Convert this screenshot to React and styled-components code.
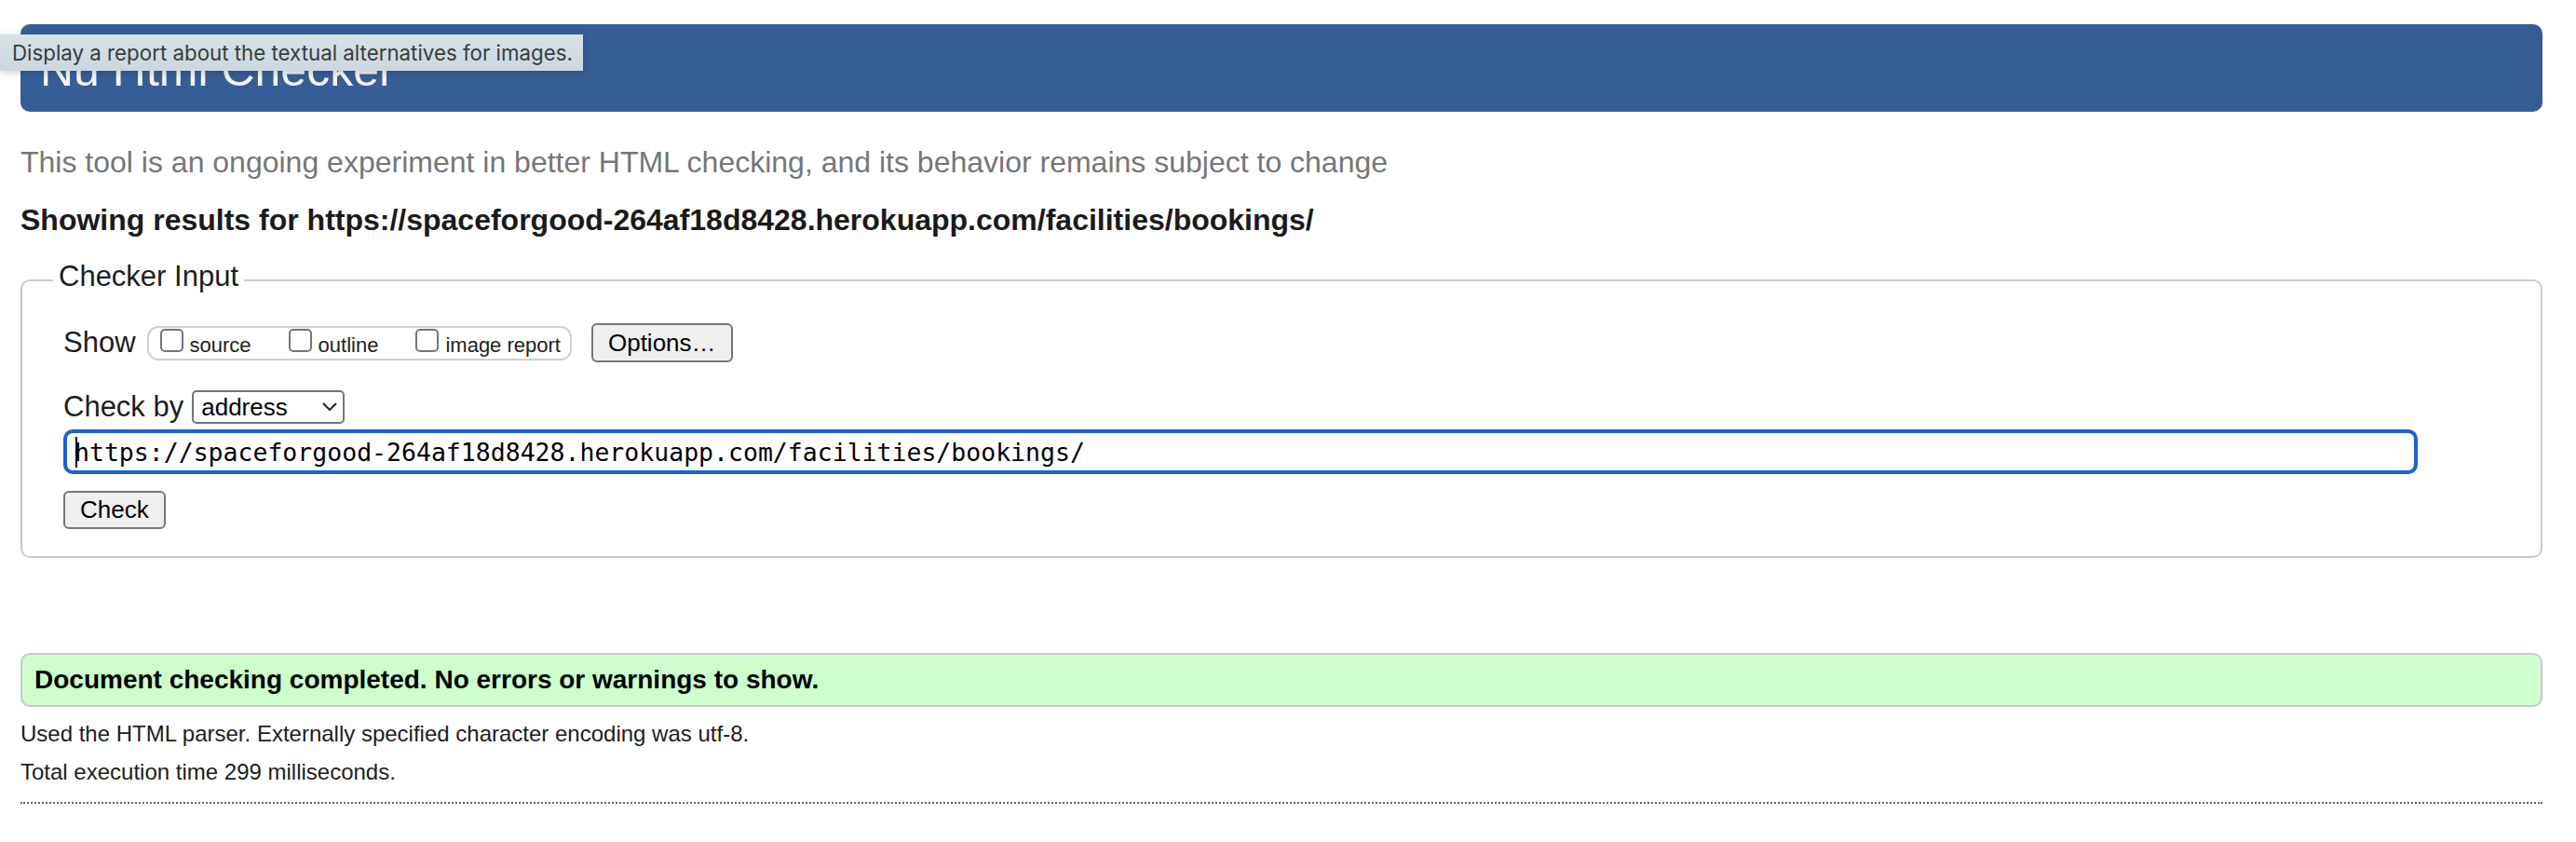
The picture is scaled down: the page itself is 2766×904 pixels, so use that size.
import React from "react";
import styled, { createGlobalStyle } from "styled-components";

const GlobalStyle = createGlobalStyle`
	html, body {
		margin: 0;
		padding: 0;
		background: #fff;
	}
	body {
		font-family: "Liberation Sans", Arial, sans-serif;
		color: #222;
	}
`

const Page = styled.div`
	position: relative;
	padding: 26px 36px 0 22px;
`

const Header = styled.header`
	height: 94px;
	box-sizing: border-box;
	padding: 3px 0 0 21px;
	display: flex;
	align-items: center;
	background: #365e96;
	border-radius: 10px;
	h1 {
		margin: 0;
		font-size: 50px;
		font-weight: 400;
		line-height: 1;
		color: #f5f5f5;
	}
`

const Tooltip = styled.div`
	position: absolute;
	left: 0;
	top: 37px;
	width: 626px;
	height: 39px;
	box-sizing: border-box;
	padding-left: 13px;
	display: flex;
	align-items: center;
	background: linear-gradient(#d7e1e8, #cad8e2);
	box-shadow: 0 2px 8px rgba(0, 0, 0, 0.18);
	color: #3b3b3b;
	font-family: Inter, "Liberation Sans", sans-serif;
	font-size: 22.3px;
	white-space: nowrap;
`

const Intro = styled.p`
	margin: 36px 0 0;
	font-size: 32px;
	line-height: 37px;
	color: #767676;
`

const Showing = styled.h2`
	margin: 25px 0 0;
	font-size: 32px;
	line-height: 37px;
	font-weight: 700;
	color: #1a1a1a;
`

const Fieldset = styled.fieldset`
	margin: 24px 0 0;
	padding: 25px 0 29px 44px;
	border: 2px solid #cbcbcb;
	border-radius: 10px;
	min-width: 0;
`

const Legend = styled.legend`
	margin-left: -11px;
	padding: 0 6px 7px;
	font-size: 31px;
	line-height: 36px;
	color: #1d1d1d;
`

const Row = styled.div`
	display: flex;
	align-items: center;
	margin-top: ${props => props.$gap || 0}px;
`

const Label = styled.span`
	font-size: 31px;
	color: #1d1d1d;
`

const OptionGroup = styled.div`
	display: flex;
	align-items: flex-start;
	box-sizing: border-box;
	height: 37px;
	margin-left: 12px;
	padding: 1px 10px 0 12px;
	border: 2px solid #cfcfcf;
	border-radius: 12px;
`

const Option = styled.label`
	display: flex;
	align-items: baseline;
	margin-right: 40px;
	font-size: 22px;
	color: #222;
	&:last-child {
		margin-right: 0;
	}
`

const Box = styled.input.attrs({ type: "checkbox" })`
	appearance: none;
	box-sizing: border-box;
	width: 25px;
	height: 25px;
	margin: 0 7px 0 0;
	border: 2px solid #767676;
	border-radius: 5px;
	background: #fff;
`

const Button = styled.button`
	box-sizing: border-box;
	height: ${props => props.$h || 42}px;
	margin-left: ${props => props.$offset || 0}px;
	padding: 0 16px;
	font-family: "Liberation Sans", Arial, sans-serif;
	font-size: 26px;
	color: #000;
	background: #efefef;
	border: 2px solid #767676;
	border-radius: 6px;
`

const Select = styled.div`
	display: flex;
	align-items: center;
	justify-content: space-between;
	box-sizing: border-box;
	width: 164px;
	height: 36px;
	margin-left: 9px;
	padding: 0 6px 0 8px;
	border: 2px solid #767676;
	border-radius: 5px;
	font-size: 26px;
	color: #000;
`

const UrlField = styled.div`
	display: flex;
	align-items: center;
	box-sizing: border-box;
	width: 2528px;
	height: 48px;
	padding-left: 8px;
	border: 4px solid #1b61d1;
	border-radius: 10px;
	font-family: "DejaVu Sans Mono", "Liberation Mono", monospace;
	font-size: 26.5px;
	color: #000;
	white-space: nowrap;
`

const Caret = styled.span`
	display: inline-block;
	width: 2px;
	height: 33px;
	margin: 0 -3px 0 1px;
	background: #000;
`

const Success = styled.div`
	display: flex;
	align-items: center;
	box-sizing: border-box;
	height: 58px;
	margin-top: 102px;
	padding-left: 13px;
	background: #ccffcc;
	border: 2px solid #c8c8c8;
	border-radius: 10px;
	font-size: 28px;
	font-weight: 700;
	color: #000;
`

const Note = styled.p`
	margin: ${props => props.$gap}px 0 0;
	font-size: 24px;
	line-height: 28px;
	color: #1d1d1d;
`

const Rule = styled.hr`
	margin: 18px 0 0;
	border: 0;
	border-top: 2px dotted #666;
`

const Chevron = () => (
	<svg width="16" height="10" viewBox="0 0 16 10" fill="none">
		<path d="M1.5 1.5 L8 8 L14.5 1.5" stroke="#222" strokeWidth="2" strokeLinecap="round" strokeLinejoin="round" />
	</svg>
)

const url = "https://spaceforgood-264af18d8428.herokuapp.com/facilities/bookings/"

const App = () => {
	return (
		<Page>
			<GlobalStyle />
			<Header>
				<h1>Nu Html Checker</h1>
			</Header>
			<Intro>This tool is an ongoing experiment in better HTML checking, and its behavior remains subject to change</Intro>
			<Showing>Showing results for {url}</Showing>
			<Fieldset>
				<Legend>Checker Input</Legend>
				<Row>
					<Label>Show</Label>
					<OptionGroup>
						<Option><Box />source</Option>
						<Option><Box />outline</Option>
						<Option><Box />image report</Option>
					</OptionGroup>
					<Button $offset={21}>Options…</Button>
				</Row>
				<Row $gap={30}>
					<Label>Check by</Label>
					<Select>
						<span>address</span>
						<Chevron />
					</Select>
				</Row>
				<Row $gap={6}>
					<UrlField>
						<Caret />
						{url}
					</UrlField>
				</Row>
				<Row $gap={18}>
					<Button $h={41}>Check</Button>
				</Row>
			</Fieldset>
			<Success>Document checking completed. No errors or warnings to show.</Success>
			<Note $gap={15}>Used the HTML parser. Externally specified character encoding was utf-8.</Note>
			<Note $gap={13}>Total execution time 299 milliseconds.</Note>
			<Rule />
			<Tooltip>Display a report about the textual alternatives for images.</Tooltip>
		</Page>
	)
}

export default App
